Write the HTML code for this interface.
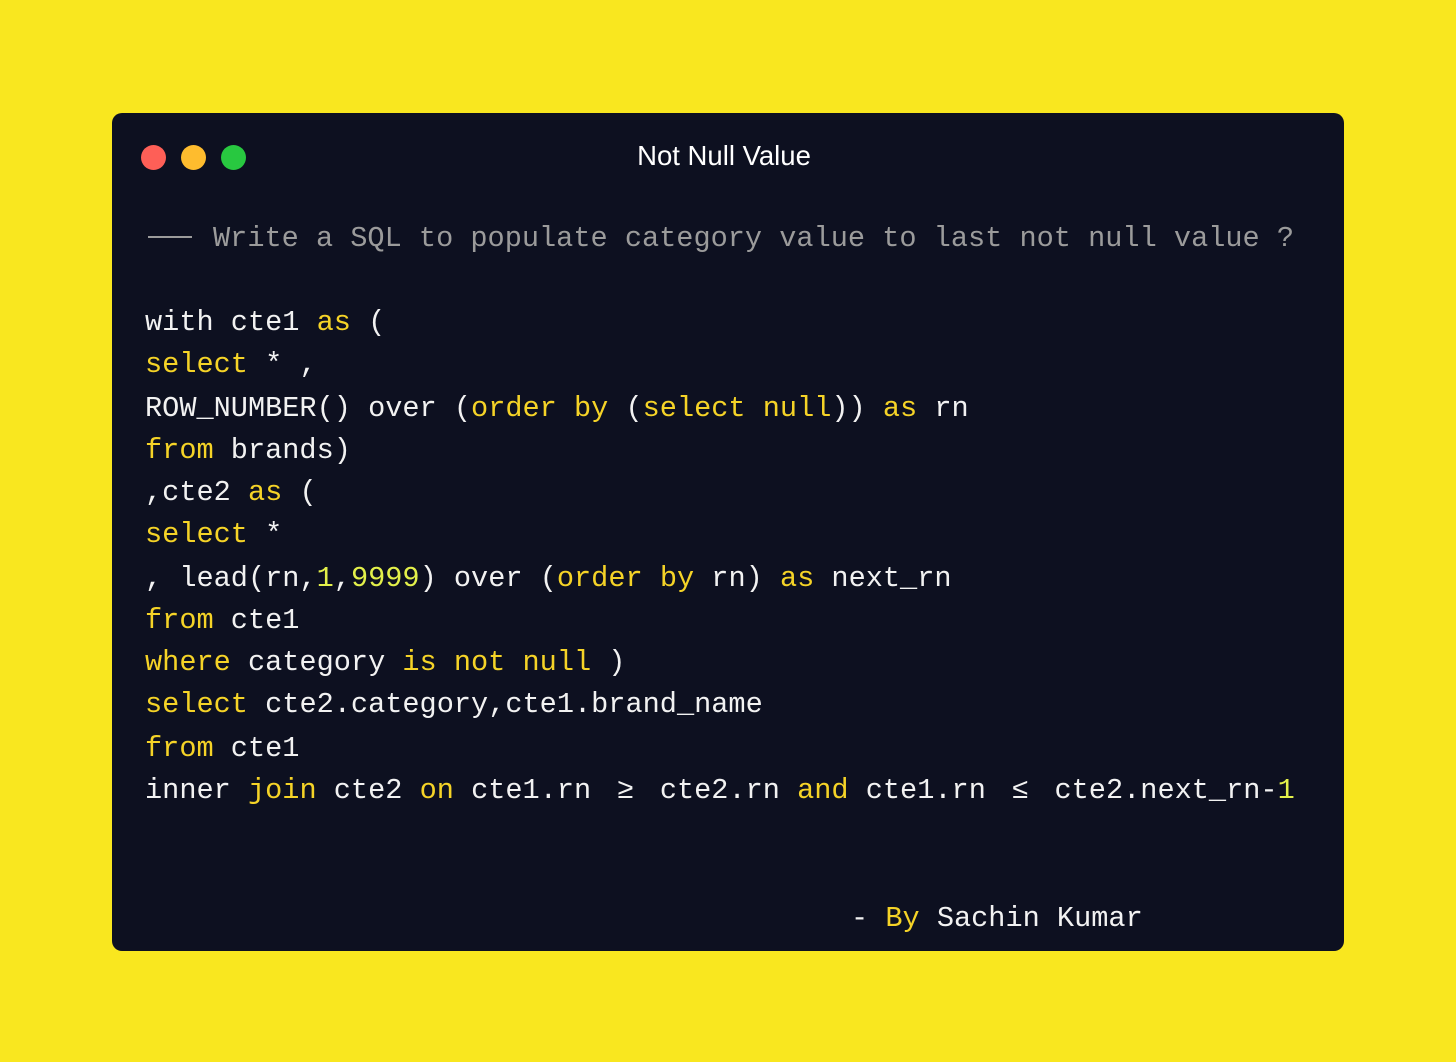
<!DOCTYPE html>
<html><head><meta charset="utf-8"><style>
html,body{margin:0;padding:0}
body{width:1456px;height:1062px;background:#f9e71f;position:relative;overflow:hidden}
.win{position:absolute;left:112px;top:113px;width:1232px;height:838px;background:#0d1020;border-radius:10px}
.dot{position:absolute;top:145px;width:25px;height:25px;border-radius:50%}
.title{position:absolute;left:0;width:1448px;top:140px;text-align:center;color:#fff;font:27.5px "Liberation Sans",sans-serif}
.l{position:absolute;left:145px;font-family:"Liberation Mono","DejaVu Sans Mono",monospace;font-size:28.6px;line-height:42px;color:#f2f2f2;white-space:pre}
.k{color:#f5d327}.n{color:#e3f04a}.c{color:#9b9b9b}
.op{display:inline-block;width:2ch;text-align:center}
.dash{display:inline-block;width:44px;height:2px;background:#9b9b9b;vertical-align:middle;margin-right:21px;position:relative;top:-1px}
</style></head><body>
<div class="win"></div>
<div class="dot" style="left:141px;background:#fe5f57"></div>
<div class="dot" style="left:181px;background:#febc2e"></div>
<div class="dot" style="left:221px;background:#28c840"></div>
<div class="title">Not Null Value</div>
<div class="l c" style="top:218px;left:148px"><span class="dash"></span>Write a SQL to populate category value to last not null value ?</div>
<div class="l" style="top:302px">with cte1 <span class="k">as</span> (</div>
<div class="l" style="top:344px"><span class="k">select</span> * ,</div>
<div class="l" style="top:388px">ROW_NUMBER() over (<span class="k">order by</span> (<span class="k">select null</span>)) <span class="k">as</span> rn</div>
<div class="l" style="top:430px"><span class="k">from</span> brands)</div>
<div class="l" style="top:472px">,cte2 <span class="k">as</span> (</div>
<div class="l" style="top:514px"><span class="k">select</span> *</div>
<div class="l" style="top:558px">, lead(rn,<span class="n">1</span>,<span class="n">9999</span>) over (<span class="k">order by</span> rn) <span class="k">as</span> next_rn</div>
<div class="l" style="top:600px"><span class="k">from</span> cte1</div>
<div class="l" style="top:642px"><span class="k">where</span> category <span class="k">is not null</span> )</div>
<div class="l" style="top:684px"><span class="k">select</span> cte2.category,cte1.brand_name</div>
<div class="l" style="top:728px"><span class="k">from</span> cte1</div>
<div class="l" style="top:770px">inner <span class="k">join</span> cte2 <span class="k">on</span> cte1.rn <span class="op">≥</span> cte2.rn <span class="k">and</span> cte1.rn <span class="op">≤</span> cte2.next_rn-<span class="n">1</span></div>
<div class="l" style="top:898px;left:851px">- <span class="k">By</span> Sachin Kumar</div>
</body></html>
